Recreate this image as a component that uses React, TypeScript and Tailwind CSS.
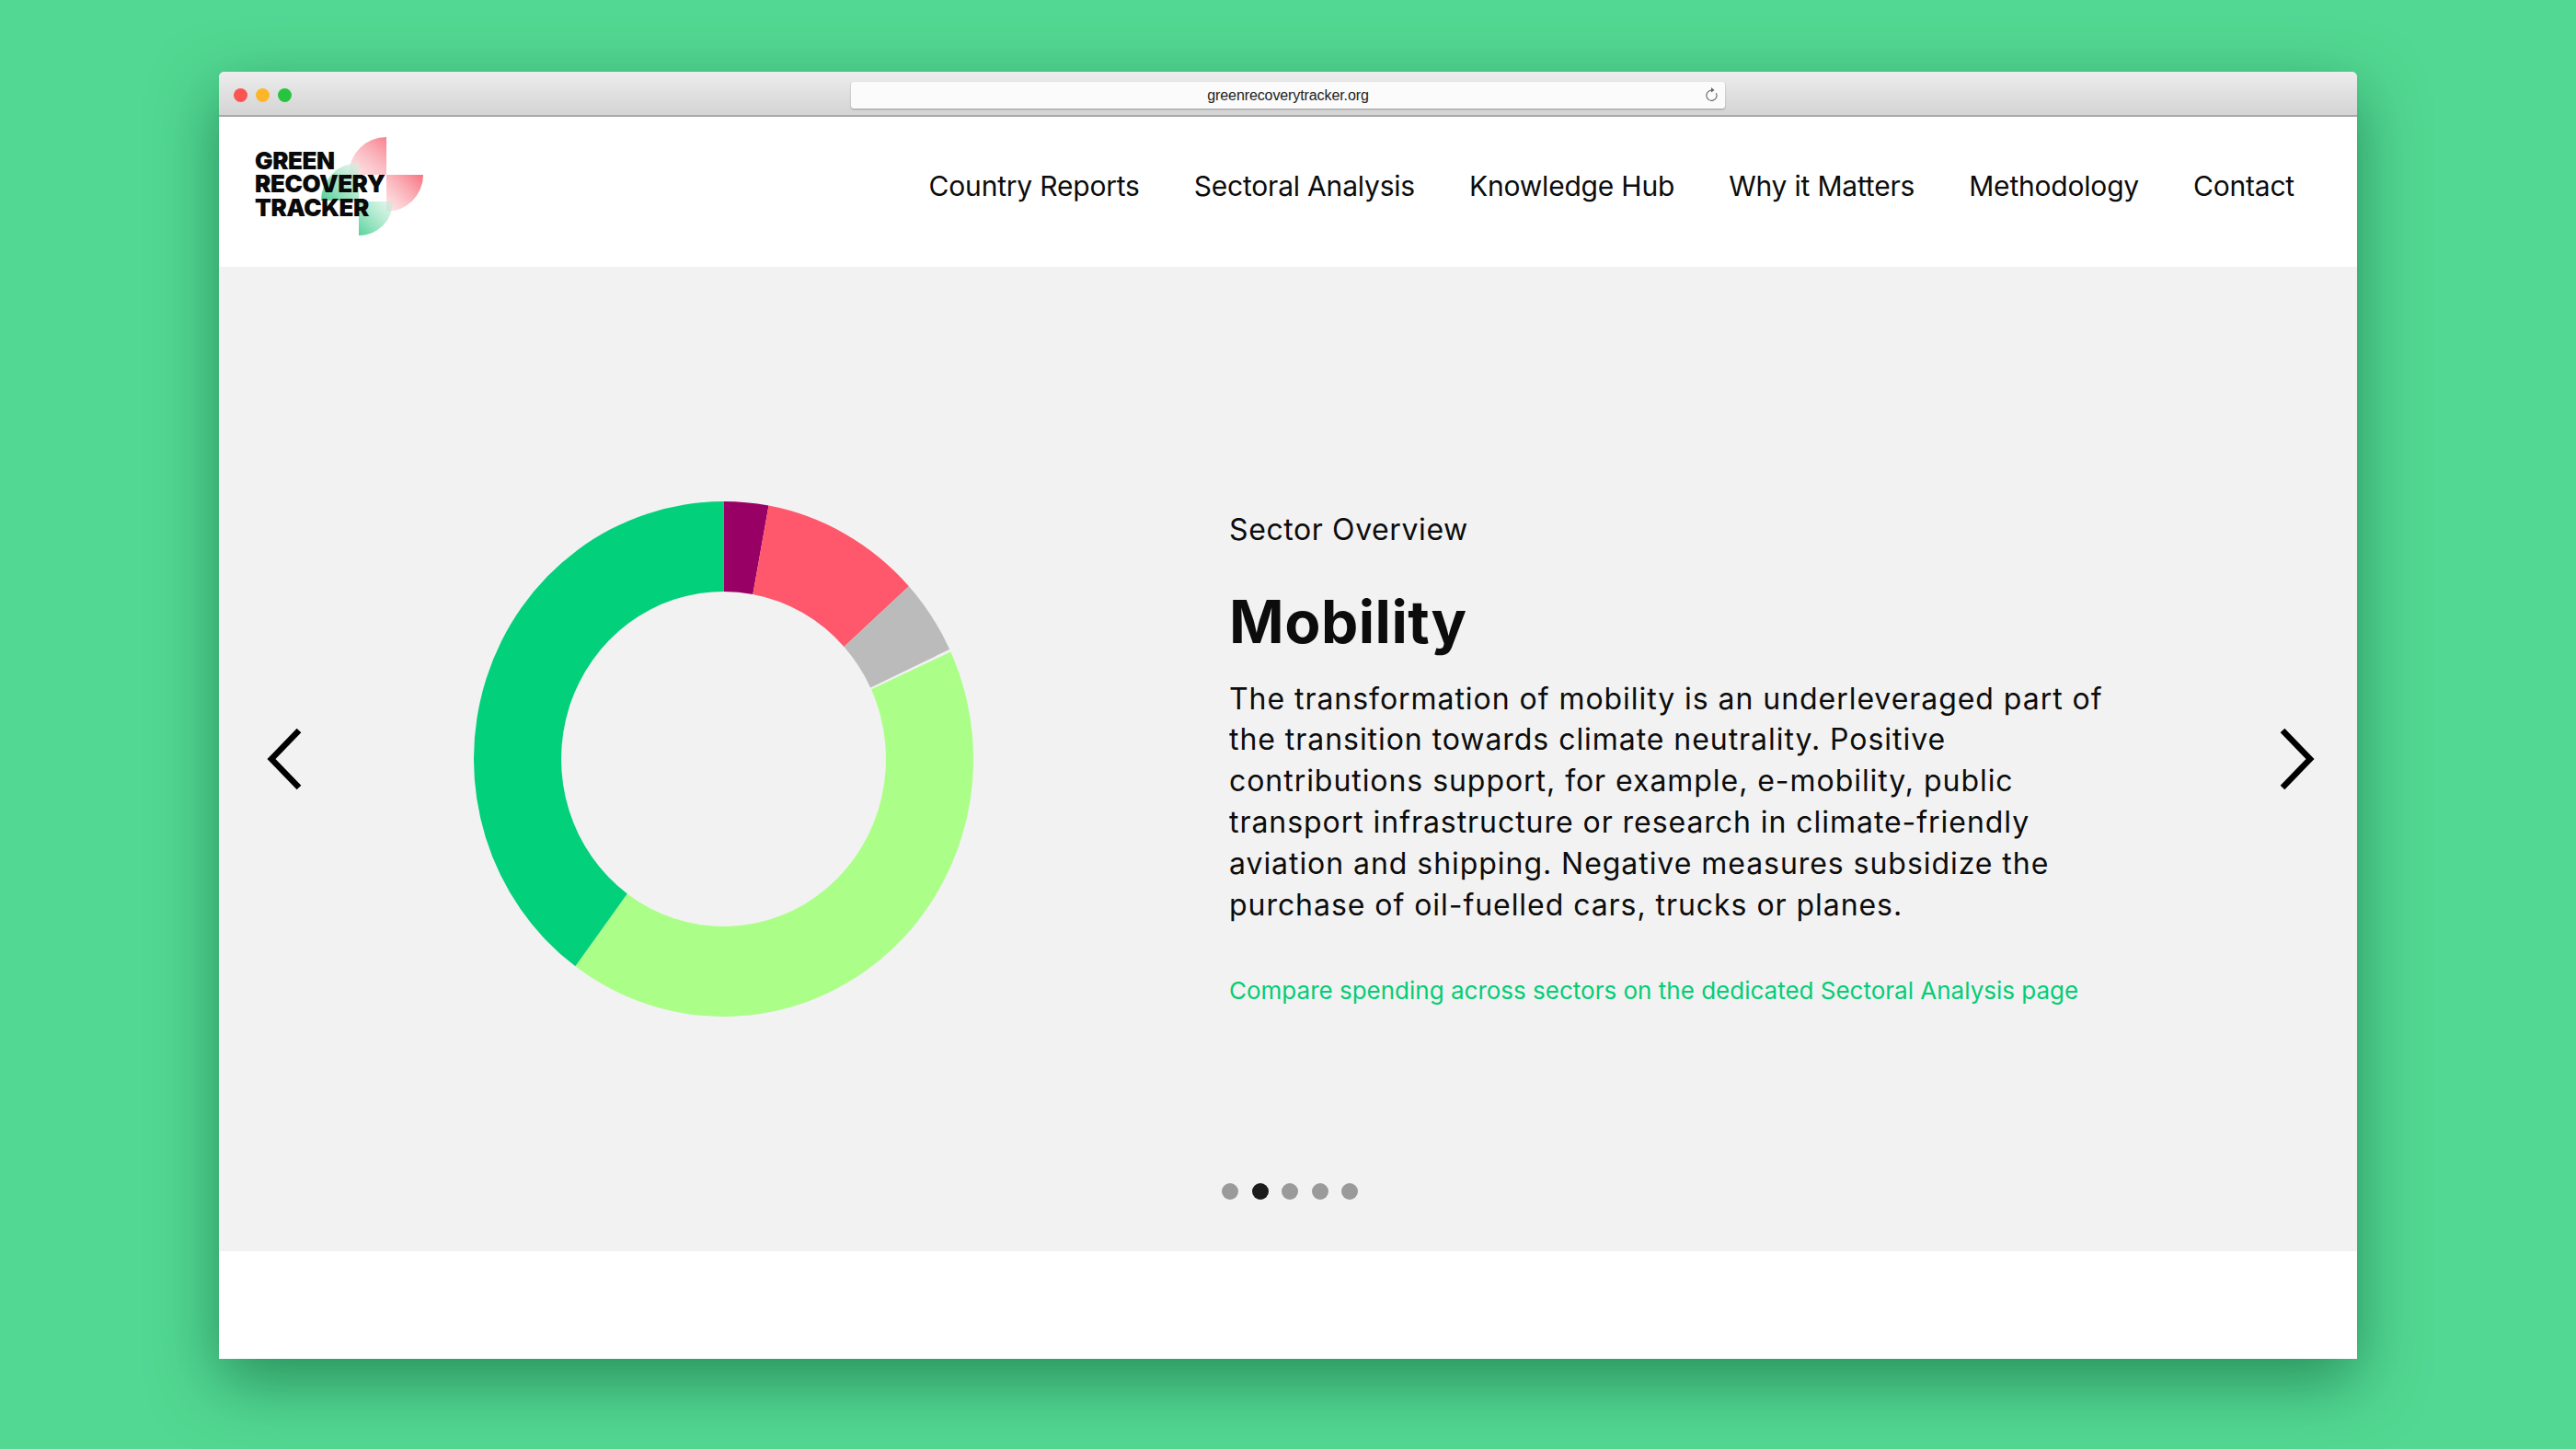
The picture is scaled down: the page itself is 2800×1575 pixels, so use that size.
const cx = 280;
const cy = 280;
const R = 280;
const r = 182;

function seg(a0: number, a1: number) {
  const p = (rad: number, a: number) => {
    const t = (a * Math.PI) / 180;
    return `${(cx + rad * Math.sin(t)).toFixed(2)} ${(cy - rad * Math.cos(t)).toFixed(2)}`;
  };
  const large = a1 - a0 > 180 ? 1 : 0;
  return `M${p(R, a0)} A${R} ${R} 0 ${large} 1 ${p(R, a1)} L${p(r, a1)} A${r} ${r} 0 ${large} 0 ${p(r, a0)} Z`;
}

const nav = [
  "Country Reports",
  "Sectoral Analysis",
  "Knowledge Hub",
  "Why it Matters",
  "Methodology",
  "Contact",
];

const lines = [
  "The transformation of mobility is an underleveraged part of",
  "the transition towards climate neutrality. Positive",
  "contributions support, for example, e-mobility, public",
  "transport infrastructure or research in climate-friendly",
  "aviation and shipping. Negative measures subsidize the",
  "purchase of oil-fuelled cars, trucks or planes.",
];

function Logo() {
  return (
    <div className="relative w-[190px] h-[110px] -mt-[10px]">
      <svg className="absolute left-0 top-0" width="190" height="110" viewBox="0 0 190 110">
        <defs>
          <linearGradient id="pTop" x1="1" y1="0" x2="0.2" y2="1">
            <stop offset="0" stopColor="#f9808e" />
            <stop offset="1" stopColor="#f9c8cc" stopOpacity="0.55" />
          </linearGradient>
          <linearGradient id="pRight" x1="1" y1="0" x2="0" y2="1">
            <stop offset="0" stopColor="#f8707f" />
            <stop offset="1" stopColor="#fbd8da" stopOpacity="0.6" />
          </linearGradient>
          <linearGradient id="gBottom" x1="0" y1="1" x2="1" y2="0">
            <stop offset="0" stopColor="#55d39a" />
            <stop offset="1" stopColor="#c9efdc" stopOpacity="0.5" />
          </linearGradient>
          <linearGradient id="gLeft" x1="0" y1="1" x2="1" y2="0">
            <stop offset="0" stopColor="#4fd196" />
            <stop offset="1" stopColor="#d8f2e4" stopOpacity="0.6" />
          </linearGradient>
        </defs>
        <path d="M143 0 A41 41 0 0 0 102 41 L143 41 Z" fill="url(#pTop)" />
        <path d="M143 41 L183 41 A40 40 0 0 1 143 81 Z" fill="url(#pRight)" />
        <path d="M113 70 L150 70 A37 37 0 0 1 113 107 Z" fill="url(#gBottom)" />
        <path d="M113 69 L72 69 A41 41 0 0 1 113 28 Z" fill="url(#gLeft)" />
      </svg>
      <div className="absolute left-0 top-[13px] font-['Inter',sans-serif] font-black text-[26px] leading-[25.5px] tracking-[-0.45px] text-[#0a0a0a]">
        <div>GREEN</div>
        <div>RECOVERY</div>
        <div>TRACKER</div>
      </div>
    </div>
  );
}

function Chevron({ right }: { right?: boolean }) {
  return (
    <svg width="40" height="72" viewBox="0 0 40 72" fill="none">
      <path
        d={right ? "M5 5 L35 36 L5 67" : "M35 5 L5 36 L35 67"}
        stroke="#000"
        strokeWidth="6.5"
      />
    </svg>
  );
}

export default function App() {
  return (
    <div className="min-h-screen bg-[#52d892] pt-[78px] overflow-hidden font-['Inter',sans-serif] text-[#0c0c0c]">
      <div className="mx-auto w-[2324px] h-[1399px] bg-white rounded-t-[6px] shadow-[0_24px_70px_rgba(0,70,40,0.5)] flex flex-col">
        <div className="h-[49px] rounded-t-[6px] bg-gradient-to-b from-[#ededed] to-[#d4d4d4] border-b-2 border-[#a9a9a9] flex items-center relative">
          <div className="flex gap-[9px] absolute left-[16px] mt-[3px]">
            <div className="w-[15px] h-[15px] rounded-full bg-[#fb5552]" />
            <div className="w-[15px] h-[15px] rounded-full bg-[#fdb62a]" />
            <div className="w-[15px] h-[15px] rounded-full bg-[#27c53f]" />
          </div>
          <div className="ml-[687px] w-[950px] h-[29px] mt-[4px] bg-[#fbfbfb] rounded-[3px] shadow-[0_1px_2px_rgba(0,0,0,0.3)] flex items-center justify-center relative">
            <span className="font-['Liberation_Sans',sans-serif] text-[16px] text-[#222] tracking-[-0.1px]">
              greenrecoverytracker.org
            </span>
            <svg className="absolute right-[7px] top-[5px]" width="16" height="18" viewBox="0 0 16 18" fill="none">
              <path d="M9 4.2 A5.6 5.6 0 1 0 13.4 7.2" stroke="#666" strokeWidth="1.1" />
              <path d="M8 1 L11.5 4 L8 6.6 Z" fill="#666" />
            </svg>
          </div>
        </div>

        <header className="h-[163px] flex items-center justify-between pl-[39px] pr-[68px]">
          <Logo />
          <nav className="flex gap-[59px] text-[30px] tracking-[-0.2px] -mt-[13px]">
            {nav.map((n) => (
              <a key={n}>{n}</a>
            ))}
          </nav>
        </header>

        <section className="h-[1070px] bg-[#f2f2f2] flex flex-col pt-[255px]">
          <div className="flex items-center h-[560px] pl-[52px] pr-[46px]">
            <Chevron />
            <svg className="ml-[185px] shrink-0" width="543" height="560" viewBox="0 0 560 560" preserveAspectRatio="none">
              <path d={seg(0, 10.4)} fill="#990066" />
              <path d={seg(10.4, 47.9)} fill="#ff576b" />
              <path d={seg(47.9, 64.8)} fill="#bbbbbb" />
              <path d={seg(65.4, 216.4)} fill="#abff88" />
              <path d={seg(216.4, 360)} fill="#03d07a" />
            </svg>
            <div className="ml-[278px] w-[960px]">
              <div className="text-[32px] leading-[40px] tracking-[0.6px]">Sector Overview</div>
              <h1 className="mt-[40px] text-[64px] leading-[80px] font-bold tracking-[0.5px]">Mobility</h1>
              <p className="mt-[22px] text-[32px] leading-[44.8px] tracking-[0.95px]">
                {lines.map((l) => (
                  <span key={l} className="block whitespace-nowrap">
                    {l}
                  </span>
                ))}
              </p>
              <a className="block mt-[54px] text-[26px] leading-[34px] text-[#03cd75]">
                Compare spending across sectors on the dedicated Sectoral Analysis page
              </a>
            </div>
            <div className="ml-auto">
              <Chevron right />
            </div>
          </div>
          <div className="flex justify-center gap-[14.5px] mt-[181px] pl-[4px]">
            <div className="w-[18px] h-[18px] rounded-full bg-[#9a9a9a]" />
            <div className="w-[18px] h-[18px] rounded-full bg-[#1c1c1c]" />
            <div className="w-[18px] h-[18px] rounded-full bg-[#9a9a9a]" />
            <div className="w-[18px] h-[18px] rounded-full bg-[#9a9a9a]" />
            <div className="w-[18px] h-[18px] rounded-full bg-[#9a9a9a]" />
          </div>
        </section>
      </div>
    </div>
  );
}
